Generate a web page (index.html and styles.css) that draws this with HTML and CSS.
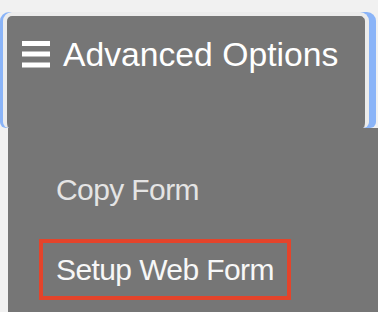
FILE: index.html
```html
<!DOCTYPE html>
<html lang="en">
<head>
    <meta charset="UTF-8">
    <meta name="viewport" content="width=device-width, initial-scale=1.0">
    <title>Advanced Options</title>
    <link rel="stylesheet" href="styles.css">
</head>
<body>
    <div class="dropdown">
        <button class="toggle">
            <svg class="burger" width="28" height="27" viewBox="0 0 28 27">
                <rect x="0" y="0" width="28" height="5" fill="#fff"/>
                <rect x="0" y="10.5" width="28" height="5" fill="#fff"/>
                <rect x="0" y="21.5" width="28" height="5" fill="#fff"/>
            </svg>
            <span>Advanced Options</span>
        </button>
        <ul class="menu">
            <li><a href="#" class="item">Copy Form</a></li>
            <li><a href="#" class="item active">Setup Web Form</a></li>
        </ul>
    </div>
</body>
</html>
```

FILE: styles.css
```css
html, body {
    height: 100%;
}
body {
    margin: 0;
    background-color: #f1f1f1;
    font-family: "Liberation Sans", Arial, sans-serif;
    overflow: hidden;
}
.dropdown {
    padding-top: 12px;
}
.toggle {
    display: flex;
    align-items: flex-start;
    gap: 13px;
    box-sizing: border-box;
    width: 366px;
    height: 116px;
    margin: 0 0 0 3px;
    padding: 19px 0 0 15px;
    background-color: #767676;
    border: 4px solid #ececec;
    border-bottom: 0;
    border-radius: 9px 9px 6px 6px;
    box-shadow: -3px 0 0 #8ab4f8, 7px 0 0 #8ab4f8;
    color: #fff;
    font-family: inherit;
    font-size: 33.7px;
    line-height: 38px;
    text-align: left;
    cursor: pointer;
}
.burger {
    flex-shrink: 0;
    margin-top: 6px;
}
.menu {
    display: flex;
    flex-direction: column;
    align-items: flex-start;
    gap: 19px;
    box-sizing: border-box;
    height: 184px;
    list-style: none;
    margin: 0 0 0 8px;
    padding: 31px 0 0 31px;
    background-color: #767676;
}
.item {
    display: block;
    padding: 0 13px;
    border: 4px solid transparent;
    color: #e4e4e4;
    font-size: 30px;
    line-height: 53px;
    letter-spacing: -0.6px;
    text-decoration: none;
}
.item.active {
    border-color: #e4442b;
    color: #f7f7f7;
}
```
